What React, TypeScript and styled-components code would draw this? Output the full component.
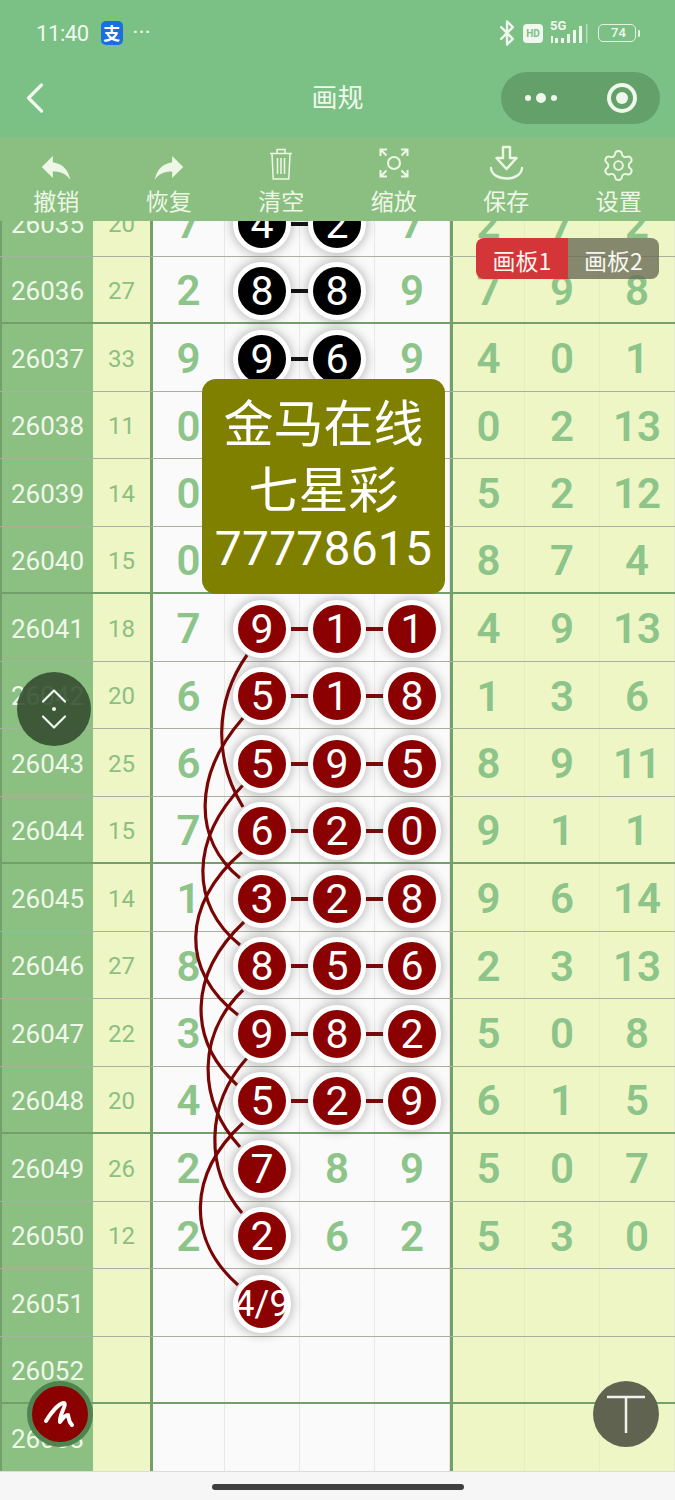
import React from "react";
import styled, { createGlobalStyle } from "styled-components";
import { Bluetooth, ChevronLeft, ChevronDown, ChevronUp, Settings } from "lucide-react";
import { MdReply } from "react-icons/md";

const CJK = `"Noto Sans CJK SC", "Noto Sans", sans-serif`;
const NUM = `Roboto, "Noto Sans CJK SC", sans-serif`;

const GlobalStyle = createGlobalStyle`
  html, body { margin: 0; padding: 0; background: #f6f6f6; }
  * { box-sizing: border-box; }
`;

type RowData = {
  id: number;
  sum?: number;
  a?: string;
  mid?: string[];
  right?: string[];
  balls?: number;
  dark?: boolean;
};

const rows: RowData[] = [
  { id: 26035, sum: 20, a: "7", mid: ["4", "2", "7"], right: ["2", "7", "2"], balls: 2, dark: true },
  { id: 26036, sum: 27, a: "2", mid: ["8", "8", "9"], right: ["7", "9", "8"], balls: 2, dark: true },
  { id: 26037, sum: 33, a: "9", mid: ["9", "6", "9"], right: ["4", "0", "1"], balls: 2, dark: true },
  { id: 26038, sum: 11, a: "0", mid: ["", "", ""], right: ["0", "2", "13"] },
  { id: 26039, sum: 14, a: "0", mid: ["", "", ""], right: ["5", "2", "12"] },
  { id: 26040, sum: 15, a: "0", mid: ["", "", ""], right: ["8", "7", "4"] },
  { id: 26041, sum: 18, a: "7", mid: ["9", "1", "1"], right: ["4", "9", "13"], balls: 3 },
  { id: 26042, sum: 20, a: "6", mid: ["5", "1", "8"], right: ["1", "3", "6"], balls: 3 },
  { id: 26043, sum: 25, a: "6", mid: ["5", "9", "5"], right: ["8", "9", "11"], balls: 3 },
  { id: 26044, sum: 15, a: "7", mid: ["6", "2", "0"], right: ["9", "1", "1"], balls: 3 },
  { id: 26045, sum: 14, a: "1", mid: ["3", "2", "8"], right: ["9", "6", "14"], balls: 3 },
  { id: 26046, sum: 27, a: "8", mid: ["8", "5", "6"], right: ["2", "3", "13"], balls: 3 },
  { id: 26047, sum: 22, a: "3", mid: ["9", "8", "2"], right: ["5", "0", "8"], balls: 3 },
  { id: 26048, sum: 20, a: "4", mid: ["5", "2", "9"], right: ["6", "1", "5"], balls: 3 },
  { id: 26049, sum: 26, a: "2", mid: ["7", "8", "9"], right: ["5", "0", "7"], balls: 1 },
  { id: 26050, sum: 12, a: "2", mid: ["2", "6", "2"], right: ["5", "3", "0"], balls: 1 },
  { id: 26051, mid: ["4/9", "", ""], balls: 1 },
  { id: 26052 },
  { id: 26053 },
];

const curves = [
  "M247 655 C214 702 214 760 243 807",
  "M243 718 C193 775 193 840 240 878",
  "M243 785 C190 840 190 905 240 945",
  "M242 852 C181 905 181 972 238 1015",
  "M244 922 C188 975 188 1040 237 1085",
  "M243 990 C197 1035 197 1100 240 1147",
  "M247 1058 C205 1105 205 1170 242 1213",
  "M243 1123 C187 1175 187 1240 238 1285",
];

const tools = ["撤销", "恢复", "清空", "缩放", "保存", "设置"];

const Phone = styled.div`
  position: relative;
  width: 675px;
  height: 1500px;
  overflow: hidden;
  background: #f6f6f6;
`;

const Header = styled.header`
  height: 137px;
  background: #7bc084;
  color: #f1f8ee;
`;

const StatusBar = styled.div`
  height: 66px;
  padding: 0 35px 0 36px;
  display: flex;
  align-items: center;
  justify-content: space-between;
`;

const StatusGroup = styled.div`
  display: flex;
  align-items: center;
`;

const Time = styled.span`
  font: 400 22px ${NUM};
  letter-spacing: -0.4px;
  margin-right: 12px;
`;

const AppBadge = styled.span`
  width: 22px;
  height: 24px;
  border-radius: 5px;
  background: #1a6fe0;
  color: #fff;
  font: 700 17px/24px ${CJK};
  text-align: center;
  margin-right: 10px;
`;

const MoreDots = styled.span`
  font: 700 17px ${NUM};
  letter-spacing: 1px;
  margin-top: -3px;
`;

const HdBadge = styled.span`
  width: 20px;
  height: 19px;
  margin: 0 7px 0 2px;
  border-radius: 4px;
  background: #f1f8ee;
  color: #7bc084;
  font: 700 10px/19px ${NUM};
  text-align: center;
`;

const SignalWrap = styled.div`
  position: relative;
  width: 40px;
  height: 24px;
  margin-right: 8px;
`;

const SignalLabel = styled.span`
  position: absolute;
  left: 0;
  top: -2px;
  font: 700 13px/13px ${NUM};
`;

const BatteryBody = styled.div`
  width: 38px;
  height: 18px;
  border: 1.5px solid #e6f3e0;
  border-radius: 5px;
  font: 500 13px/15px ${NUM};
  text-align: center;
  padding-left: 3px;
`;

const BatteryTip = styled.div`
  width: 2px;
  height: 7px;
  margin-left: 2px;
  background: #e6f3e0;
  border-radius: 1px;
`;

const NavBar = styled.div`
  height: 71px;
  padding: 6px 15px 13px 9px;
  display: grid;
  grid-template-columns: 1fr auto;
  align-items: center;
  position: relative;
`;

const Title = styled.h1`
  position: absolute;
  left: 0;
  right: 0;
  top: 5px;
  margin: 0;
  text-align: center;
  font: 400 26px/50px ${CJK};
`;

const Capsule = styled.div`
  width: 159px;
  height: 52px;
  border-radius: 26px;
  background: #64a069;
  display: flex;
  align-items: center;
  justify-content: space-between;
  padding: 0 23px 0 24px;
`;

const Dots = styled.div`
  display: flex;
  align-items: center;
  gap: 5px;
`;

const Dot = styled.i<{ $size: number }>`
  width: ${(p) => p.$size}px;
  height: ${(p) => p.$size}px;
  border-radius: 50%;
  background: #eef7ea;
`;

const Target = styled.div`
  width: 30px;
  height: 30px;
  border-radius: 50%;
  border: 4px solid #eef7ea;
  display: flex;
  align-items: center;
  justify-content: center;
  &::after {
    content: "";
    width: 12px;
    height: 12px;
    border-radius: 50%;
    background: #eef7ea;
  }
`;

const Toolbar = styled.nav`
  height: 84px;
  background: #8bbf82;
  display: grid;
  grid-template-columns: repeat(6, 1fr);
`;

const Tool = styled.div`
  display: flex;
  flex-direction: column;
  align-items: center;
  color: #eef7e6;
`;

const ToolIcon = styled.div`
  height: 48px;
  padding-top: 11px;
  display: flex;
  align-items: flex-start;
  justify-content: center;
`;

const ToolLabel = styled.span`
  font: 400 23px/30px ${CJK};
`;

const Scroller = styled.main`
  height: 1250px;
  overflow: hidden;
`;

const Board = styled.div`
  position: relative;
  margin-top: -32px;
`;

const Row = styled.div<{ $bold: boolean }>`
  height: 67.5px;
  display: grid;
  grid-template-columns: 93px 57px repeat(4, 75px) repeat(3, 75px);
  border-bottom: ${(p) => (p.$bold ? "2px solid #739f6b" : "1px solid #a8b0a0")};
`;

const IdCell = styled.div`
  background: #8cbf82;
  color: #eff8e9;
  font: 400 26px ${NUM};
  padding-top: 3px;
  display: flex;
  align-items: center;
  justify-content: center;
  border-left: 2px solid #739f6b;
`;

const SumCell = styled.div`
  background: #eef6c6;
  color: #8cbf82;
  font: 400 24px ${NUM};
  padding-top: 3px;
  display: flex;
  align-items: center;
  justify-content: center;
`;

const Cell = styled.div<{ $cream?: boolean; $edge?: boolean }>`
  background: ${(p) => (p.$cream ? "#eef6c6" : "#fafafa")};
  color: #8cc48a;
  font: 600 42px ${NUM};
  padding-top: 3px;
  display: flex;
  align-items: center;
  justify-content: center;
  border-right: 1px solid ${(p) => (p.$cream ? "#e6edc4" : "#e8e8e6")};
  border-left: ${(p) => (p.$edge ? "3px solid #739f6b" : "0")};
`;

const Ball = styled.div<{ $dark?: boolean; $link: boolean }>`
  position: relative;
  z-index: 2;
  flex: none;
  width: 58px;
  height: 58px;
  border-radius: 50%;
  border: 5px solid #fff;
  background: ${(p) => (p.$dark ? "#000" : "#8b0000")};
  color: #fff;
  font: 400 41px/48px ${NUM};
  text-align: center;
  white-space: nowrap;
  box-shadow: 0 0 10px 2px rgba(60, 60, 60, 0.3);
  &::after {
    content: "";
    display: ${(p) => (p.$link ? "block" : "none")};
    position: absolute;
    left: 53px;
    top: 22px;
    width: 18px;
    height: 4px;
    background: ${(p) => (p.$dark ? "#111" : "#7a0a0a")};
  }
`;

const WideText = styled.span`
  display: block;
  margin: 0 -6px;
  font-size: 36px;
`;

const Curves = styled.svg`
  position: absolute;
  left: 0;
  top: 0;
  z-index: 1;
  pointer-events: none;
`;

const Notice = styled.div`
  position: absolute;
  z-index: 4;
  left: 202px;
  top: 379px;
  width: 243px;
  height: 215px;
  padding-top: 8px;
  border-radius: 14px;
  background: #808000;
  color: #fff;
  text-align: center;
  font: 400 50px/66px ${CJK};
`;

const NoticeNumber = styled.div`
  font: 400 48px/60px ${NUM};
  letter-spacing: 0.2px;
`;

const BoardTabs = styled.div`
  position: absolute;
  z-index: 4;
  left: 476px;
  top: 238px;
  display: flex;
  height: 41px;
  color: #f6f6f0;
  font: 400 23px/44px ${CJK};
`;

const BoardTab = styled.div<{ $active?: boolean }>`
  width: ${(p) => (p.$active ? 92 : 91)}px;
  text-align: center;
  background: ${(p) => (p.$active ? "#d33538" : "rgba(105, 105, 85, 0.78)")};
  border-radius: ${(p) => (p.$active ? "8px 0 0 8px" : "0 8px 8px 0")};
`;

const Pager = styled.div`
  position: absolute;
  z-index: 4;
  left: 17px;
  top: 672px;
  width: 74px;
  height: 74px;
  border-radius: 50%;
  background: rgba(50, 75, 45, 0.88);
  color: #f0f4ee;
  display: flex;
  flex-direction: column;
  align-items: center;
  justify-content: center;
`;

const PagerDot = styled.i`
  flex: none;
  width: 4px;
  height: 4px;
  border-radius: 50%;
  background: #f0f4ee;
`;

const PagerUp = styled(ChevronUp)`
  flex: none;
  margin: -9px 0 -11px;
`;

const PagerDown = styled(ChevronDown)`
  flex: none;
  margin: -11px 0 -9px;
`;

const RoundButton = styled.div`
  position: absolute;
  z-index: 4;
  top: 1381px;
  width: 66px;
  height: 66px;
  border-radius: 50%;
  display: flex;
  align-items: center;
  justify-content: center;
`;

const BrushButton = styled(RoundButton)`
  left: 27px;
  background: #8b0000;
  border: 5px solid #4f8450;
`;

const TextButton = styled(RoundButton)`
  left: 593px;
  background: #5f6350;
  color: #f2f2ee;
`;

const HomeBar = styled.footer`
  height: 29px;
  border-top: 1px solid #dcdcdc;
  display: flex;
  justify-content: center;
  padding-top: 12px;
`;

const HomeHandle = styled.div`
  width: 252px;
  height: 6px;
  border-radius: 3px;
  background: #3f3f3f;
`;

const TrashIcon = () => (
  <svg width="24" height="32" viewBox="0 0 24 32" fill="none" stroke="currentColor" strokeWidth="1.5">
    <path d="M1 5.5h22M8 5V1.5h8V5M3 6l1.2 25h15.6L21 6M8.5 10v16M12 10v16M15.5 10v16" />
  </svg>
);

const ZoomIcon = () => (
  <svg width="30" height="30" viewBox="0 0 30 30" fill="none" stroke="currentColor" strokeWidth="2">
    <circle cx="15" cy="15" r="6" />
    <path d="M1.5 8V1.5H8M1.5 1.5l6 6M28.5 8V1.5H22M28.5 1.5l-6 6M1.5 22v6.5H8M1.5 28.5l6-6M28.5 22v6.5H22M28.5 28.5l-6-6" />
  </svg>
);

const SaveIcon = () => (
  <svg width="35" height="36" viewBox="0 0 35 36" fill="none" stroke="currentColor" strokeWidth="2.4" style={{ marginTop: -3 }}>
    <path d="M14 2h7v11h6.5L17.5 24 7.5 13H14z" strokeLinejoin="round" />
    <path d="M2 23c1 14 30 14 31 0" strokeLinecap="round" />
  </svg>
);

const toolIcons = [
  <MdReply key="undo" size={38} />,
  <MdReply key="redo" size={38} style={{ transform: "scaleX(-1)" }} />,
  <TrashIcon key="trash" />,
  <ZoomIcon key="zoom" />,
  <SaveIcon key="save" />,
  <Settings key="settings" size={35} strokeWidth={1.3} />,
];

const App = () => {
  return (
    <Phone>
      <GlobalStyle />
      <Header>
        <StatusBar>
          <StatusGroup>
            <Time>11:40</Time>
            <AppBadge>支</AppBadge>
            <MoreDots>···</MoreDots>
          </StatusGroup>
          <StatusGroup>
            <Bluetooth size={28} strokeWidth={2} />
            <HdBadge>HD</HdBadge>
            <SignalWrap>
              <SignalLabel>5G</SignalLabel>
              <svg width="40" height="24" viewBox="0 0 40 24" fill="currentColor">
                <path d="M1 15h2v7H1zM5 17h3v5H5zM11 17h3v5h-3zM17 13h3v9h-3zM23 9h3v13h-3zM29 5h3v17h-3z" />
                <path d="M36 3h1.5v19H36z" opacity="0.5" />
              </svg>
            </SignalWrap>
            <BatteryBody>74</BatteryBody>
            <BatteryTip />
          </StatusGroup>
        </StatusBar>
        <NavBar>
          <ChevronLeft size={52} strokeWidth={1.5} />
          <Title>画规</Title>
          <Capsule>
            <Dots>
              <Dot $size={6} />
              <Dot $size={10} />
              <Dot $size={6} />
            </Dots>
            <Target />
          </Capsule>
        </NavBar>
      </Header>
      <Toolbar>
        {tools.map((label, i) => (
          <Tool key={label}>
            <ToolIcon>{toolIcons[i]}</ToolIcon>
            <ToolLabel>{label}</ToolLabel>
          </Tool>
        ))}
      </Toolbar>
      <Scroller>
        <Board>
          {rows.map((row, i) => (
            <Row key={row.id} $bold={i % 4 === 1}>
              <IdCell>{row.id}</IdCell>
              <SumCell>{row.sum}</SumCell>
              <Cell $edge>{row.a}</Cell>
              {[0, 1, 2].map((c) => {
                const value = row.mid?.[c];
                const isBall = c < (row.balls ?? 0);
                return (
                  <Cell key={c}>
                    {isBall ? (
                      <Ball $dark={row.dark} $link={c + 1 < (row.balls ?? 0)}>
                        {value === "4/9" ? <WideText>{value}</WideText> : value}
                      </Ball>
                    ) : (
                      value
                    )}
                  </Cell>
                );
              })}
              {[0, 1, 2].map((c) => (
                <Cell key={c} $cream $edge={c === 0}>
                  {row.right?.[c]}
                </Cell>
              ))}
            </Row>
          ))}
          <Curves width="675" height="1282.5" viewBox="0 189 675 1282.5" fill="none" stroke="#7a0505" strokeWidth="3.2">
            {curves.map((d) => (
              <path key={d} d={d} />
            ))}
          </Curves>
        </Board>
      </Scroller>
      <HomeBar>
        <HomeHandle />
      </HomeBar>
      <BoardTabs>
        <BoardTab $active>画板1</BoardTab>
        <BoardTab>画板2</BoardTab>
      </BoardTabs>
      <Notice>
        金马在线
        <br />
        七星彩
        <NoticeNumber>77778615</NoticeNumber>
      </Notice>
      <Pager>
        <PagerUp size={44} strokeWidth={1.2} />
        <PagerDot />
        <PagerDown size={44} strokeWidth={1.2} />
      </Pager>
      <BrushButton>
        <svg width="38" height="38" viewBox="0 0 38 38" fill="none" stroke="#fff" strokeWidth="4" strokeLinecap="round" strokeLinejoin="round">
          <path d="M5 26C10 18 18 8 23 8c3 2-5 12-4 19 2-3 5-7 8-7 1 3 0 6 4 10" />
        </svg>
      </BrushButton>
      <TextButton>
        <svg width="40" height="40" viewBox="0 0 40 40" fill="none" stroke="currentColor" strokeWidth="2.5">
          <path d="M1 3h38M20 3v36" />
        </svg>
      </TextButton>
    </Phone>
  );
};

export default App;
